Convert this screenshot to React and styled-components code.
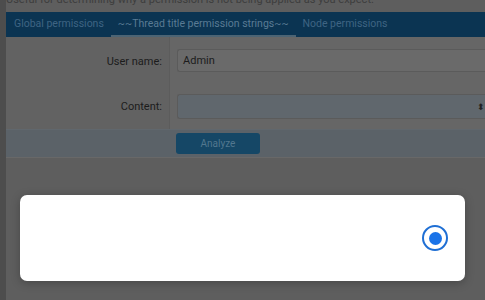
import React from "react";
import styled, { createGlobalStyle } from "styled-components";

const GlobalStyle = createGlobalStyle`
  html, body {
    margin: 0;
    height: 100%;
    overflow: hidden;
    background: #5d5d5d;
    font-family: Roboto, "Liberation Sans", sans-serif;
  }
`;

const Page = styled.div`
  display: flex;
  height: 300px;
`;

const Sidebar = styled.div`
  width: 6px;
  background: #4d4d4d;
`;

const Main = styled.div`
  flex: 1;
  background: #5e5e5e;
  overflow: hidden;
`;

const Description = styled.p`
  margin: -7px 0 0;
  height: 19px;
  line-height: 14px;
  font-size: 11px;
  color: #3d3d3d;
  white-space: nowrap;
`;

const Block = styled.div`
  background: #666;
`;

const TabBar = styled.div`
  display: flex;
  height: 25px;
  background: #0b3452;
  padding-left: 1px;
`;

const Tab = styled.div`
  display: flex;
  align-items: center;
  padding: 0 7px;
  font-size: 10.5px;
  color: ${(p) => (p.$active ? "#5a7b94" : "#3f6483")};
  border-bottom: 2px solid ${(p) => (p.$active ? "#4c6474" : "transparent")};
  white-space: nowrap;
`;

const FormBody = styled.div`
  display: grid;
  grid-template-columns: 163px 1fr;
`;

const Label = styled.div`
  background: #626262;
  display: flex;
  justify-content: flex-end;
  align-items: flex-start;
  padding: ${(p) => p.$pad} 7px 0 0;
  font-size: 11px;
  color: #1c1c1c;
`;

const Field = styled.div`
  background: #666;
  border-left: 1px solid #5c5c5c;
  padding: ${(p) => p.$pad} 0 ${(p) => p.$bottom} 7px;
`;

const TextInput = styled.div`
  height: 23px;
  box-sizing: border-box;
  background: #6a6a6a;
  border: 1px solid #5b5b5b;
  border-right: none;
  border-radius: 3px 0 0 3px;
  padding: 0 5px;
  display: flex;
  align-items: center;
  font-size: 11px;
  color: #1c1c1c;
`;

const Select = styled(TextInput)`
  height: 25px;
  background: #60676d;
  justify-content: flex-end;
  padding-right: 0;
  font-size: 9px;
  color: #222;
`;

const SubmitRow = styled.div`
  display: flex;
  height: 29px;
  box-sizing: border-box;
  align-items: center;
  padding-left: 170px;
  background: #5b6268;
  border-top: 1px solid #60676d;
  border-bottom: 1px solid #686868;
`;

const Button = styled.div`
  width: 84px;
  height: 21px;
  border-radius: 3px;
  background: #154766;
  color: #52778f;
  font-size: 10px;
  display: flex;
  align-items: center;
  justify-content: center;
`;

const Backdrop = styled.div`
  position: fixed;
  inset: 0;
  display: flex;
  align-items: flex-end;
  padding: 0 20px 19px;
`;

const Sheet = styled.div`
  flex: 1;
  height: 86px;
  background: #fff;
  border-radius: 7px;
  box-shadow: 0 2px 10px rgba(0, 0, 0, 0.25);
  display: flex;
  align-items: center;
  justify-content: flex-end;
  padding-right: 17px;
`;

const Radio = styled.span`
  width: 26px;
  height: 26px;
  box-sizing: border-box;
  border-radius: 50%;
  border: 2.5px solid #1f6fd4;
  display: flex;
  align-items: center;
  justify-content: center;
  &::after {
    content: "";
    width: 13px;
    height: 13px;
    border-radius: 50%;
    background: #1a73e8;
  }
`;

const App = () => {
  return (
    <>
      <GlobalStyle />
      <Page>
        <Sidebar />
        <Main>
          <Description>
            Useful for determining why a permission is not being applied as you expect.
          </Description>
          <Block>
            <TabBar>
              <Tab>Global permissions</Tab>
              <Tab $active>~~Thread title permission strings~~</Tab>
              <Tab>Node permissions</Tab>
            </TabBar>
            <FormBody>
              <Label $pad="18px">User name:</Label>
              <Field $pad="12px" $bottom="11px">
                <TextInput>Admin</TextInput>
              </Field>
              <Label $pad="17px">Content:</Label>
              <Field $pad="11px" $bottom="10px">
                <Select>⬍</Select>
              </Field>
            </FormBody>
            <SubmitRow>
              <Button>Analyze</Button>
            </SubmitRow>
          </Block>
        </Main>
      </Page>
      <Backdrop>
        <Sheet>
          <Radio />
        </Sheet>
      </Backdrop>
    </>
  );
};

export default App;
